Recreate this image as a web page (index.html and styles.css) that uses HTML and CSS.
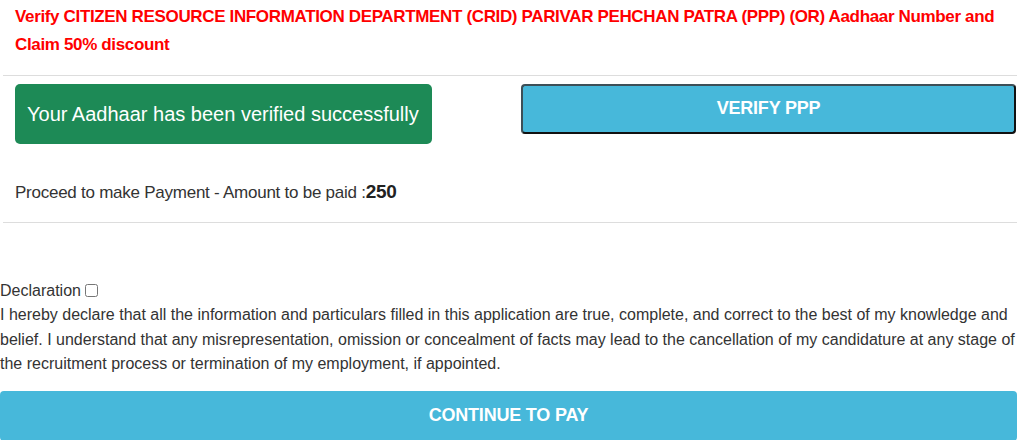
FILE: index.html
```html
<!DOCTYPE html>
<html lang="en">
<head>
<meta charset="utf-8">
<title>Verify PPP</title>
<link rel="stylesheet" href="styles.css">
</head>
<body>
<div class="page">
  <h4 class="title">Verify CITIZEN RESOURCE INFORMATION DEPARTMENT (CRID) PARIVAR PEHCHAN PATRA (PPP) (OR) Aadhaar Number and Claim 50% discount</h4>
  <hr class="rule">
  <div class="verify-row">
    <div class="verify-col">
      <div class="success-box">Your Aadhaar has been verified successfully</div>
    </div>
    <div class="verify-col verify-col-right">
      <button class="btn-verify" type="button">VERIFY PPP</button>
    </div>
  </div>
  <p class="payment">Proceed to make Payment - Amount to be paid :<b class="amount">250</b></p>
  <hr class="rule">
  <div class="declaration">
    <label class="decl-label">Declaration <input type="checkbox" class="decl-check"></label>
    <p class="decl-text">I hereby declare that all the information and particulars filled in this application are true, complete, and correct to the best of my knowledge and belief. I understand that any misrepresentation, omission or concealment of facts may lead to the cancellation of my candidature at any stage of the recruitment process or termination of my employment, if appointed.</p>
  </div>
  <button class="btn-continue" type="button">CONTINUE TO PAY</button>
</div>
</body>
</html>
```

FILE: styles.css
```css
* { box-sizing: border-box; }
html, body { margin: 0; padding: 0; background: #fff; }
body {
  font-family: "Liberation Sans", Arial, sans-serif;
  color: #333;
  overflow: hidden;
}
.title {
  margin: 0;
  padding: 3px 15px 0;
  color: #f00;
  font-size: 17px;
  font-weight: bold;
  line-height: 28px;
  letter-spacing: -0.35px;
}
.rule {
  margin: 16px 0 0 3px;
  border: 0;
  border-top: 1px solid #ddd;
  height: 0;
}
.verify-row {
  display: flex;
  margin-top: 8px;
}
.verify-col { flex: 0 0 521px; padding-left: 15px; }
.verify-col-right { flex: 1 1 auto; padding-left: 0; padding-right: 1px; }
.success-box {
  display: inline-block;
  background: #1d8a56;
  color: #fff;
  font-size: 20px;
  line-height: 60px;
  height: 60px;
  padding: 0 13px 0 12px;
  border-radius: 5px;
}
.btn-verify {
  display: block;
  width: 100%;
  height: 50px;
  background: #47b8da;
  color: #fff;
  font-family: inherit;
  font-size: 18px;
  font-weight: bold;
  border: 2px solid;
  border-color: #3d4f57 #111 #111 #3d4f57;
  border-radius: 4px;
  padding: 0 0 1px;
  letter-spacing: -0.2px;
}
.payment {
  margin: 36px 0 0;
  padding-left: 15px;
  font-size: 17px;
  line-height: 24px;
  letter-spacing: -0.25px;
}
.amount { font-size: 19px; color: #222; }
.payment + .rule { margin-top: 17px; }
.declaration { margin-top: 56px; font-size: 16px; }
.decl-label { display: block; line-height: 24px; }
.decl-check { width: 13px; height: 13px; margin: 0; vertical-align: -1px; }
.decl-text { margin: 0; line-height: 24.5px; }
.btn-continue {
  display: block;
  width: 100%;
  margin-top: 14px;
  height: 50px;
  padding: 0 0 1px;
  background: #47b8da;
  color: #fff;
  font-family: inherit;
  font-size: 18px;
  font-weight: bold;
  border: 0;
  border-radius: 4px;
  letter-spacing: -0.2px;
}
```
